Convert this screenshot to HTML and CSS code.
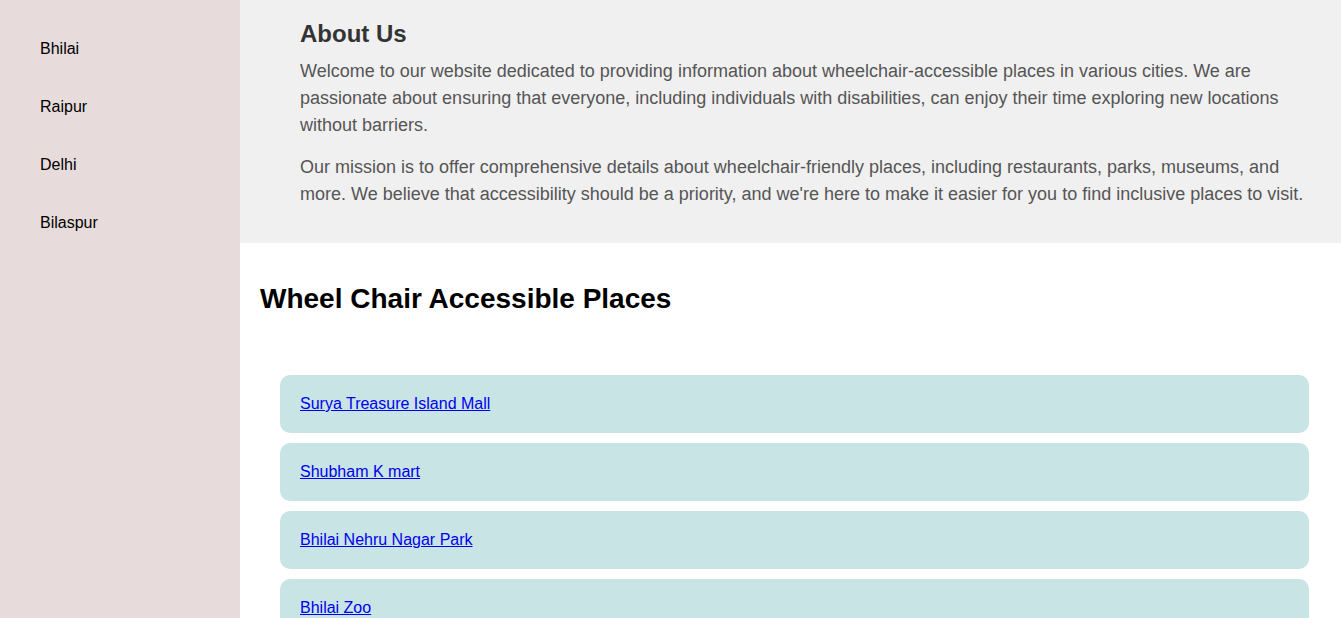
FILE: index.html
```html
<!DOCTYPE html>
<html lang="en">
<head>
<meta charset="utf-8">
<title>Wheel Chair Accessible Places</title>
<link rel="stylesheet" href="styles.css">
</head>
<body>
<div class="layout">
  <nav class="sidebar">
    <a class="city" href="#">Bhilai</a>
    <a class="city" href="#">Raipur</a>
    <a class="city" href="#">Delhi</a>
    <a class="city" href="#">Bilaspur</a>
  </nav>
  <div class="content">
    <section class="about">
      <h2 class="about-title">About Us</h2>
      <p class="about-text">Welcome to our website dedicated to providing information about wheelchair-accessible places in various cities. We are passionate about ensuring that everyone, including individuals with disabilities, can enjoy their time exploring new locations without barriers.</p>
      <p class="about-text">Our mission is to offer comprehensive details about wheelchair-friendly places, including restaurants, parks, museums, and more. We believe that accessibility should be a priority, and we're here to make it easier for you to find inclusive places to visit.</p>
    </section>
    <main class="places">
      <h1 class="places-title">Wheel Chair Accessible Places</h1>
      <ul class="place-list">
        <li class="place"><a href="#">Surya Treasure Island Mall</a></li>
        <li class="place"><a href="#">Shubham K mart</a></li>
        <li class="place"><a href="#">Bhilai Nehru Nagar Park</a></li>
        <li class="place"><a href="#">Bhilai Zoo</a></li>
      </ul>
    </main>
  </div>
</div>
</body>
</html>
```
FILE: styles.css
```css
html, body {
  margin: 0;
  padding: 0;
}
body {
  font-family: "Liberation Sans", Arial, sans-serif;
  background: #ffffff;
  overflow: hidden;
}
.layout {
  display: flex;
  min-height: 100vh;
}
.sidebar {
  width: 240px;
  flex: 0 0 240px;
  background: #e7dbdb;
  padding: 20px 0;
  box-sizing: border-box;
  display: flex;
  flex-direction: column;
}
.city {
  display: block;
  padding: 20px 40px;
  font-size: 16px;
  line-height: 18px;
  color: #000;
  text-decoration: none;
}
.content {
  flex: 1;
  min-width: 0;
}
.about {
  background: #f0f0f0;
  padding: 20px 30px 20px 60px;
}
.about-title {
  margin: 0 0 10px;
  font-size: 24px;
  font-weight: bold;
  color: #333;
}
.about-text {
  margin: 0 0 15px;
  font-size: 18px;
  line-height: 27px;
  color: #555;
}
.places {
  padding: 20px;
}
.places-title {
  font-size: 28px;
  margin: 20px 0 0;
  color: #000;
}
.place-list {
  list-style: none;
  margin: 60px 0 0;
  padding: 0 12px 0 20px;
  display: flex;
  flex-direction: column;
  gap: 10px;
}
.place {
  background: #c9e4e5;
  border-radius: 10px;
  padding: 20px;
  font-size: 16px;
  line-height: 18px;
}
.place a {
  color: #0000ee;
  text-decoration: underline;
}
```
